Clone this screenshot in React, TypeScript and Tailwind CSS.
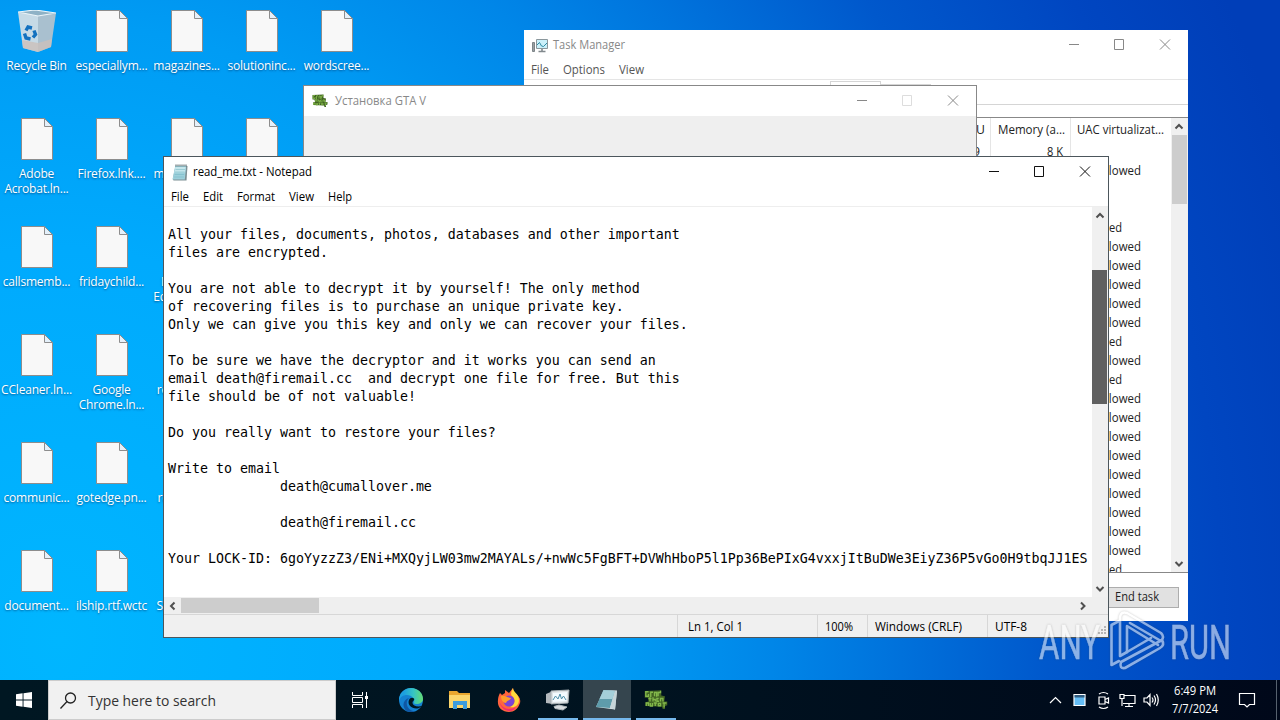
import type { ReactNode } from "react";

const desktopIcons = [
  ["Recycle Bin", "Adobe\nAcrobat.ln...", "callsmemb...", "CCleaner.ln...", "communic...", "document..."],
  ["especiallym...", "Firefox.lnk....", "fridaychild...", "Google\nChrome.ln...", "gotedge.pn...", "ilship.rtf.wctc"],
  ["magazines...", "mediacent...", "Microsoft\nEdge.lnk.w...", "readme.txt", "readme.rtf", "Skype.lnk..."],
  ["solutioninc...", ""],
  ["wordscree..."],
];

const uacRows = [
  "Not allowed", "", "", "Disabled", "Not allowed", "Not allowed", "Not allowed", "Not allowed", "Not allowed",
  "Disabled", "Not allowed", "Disabled", "Not allowed", "Not allowed", "Not allowed", "Not allowed", "Not allowed",
  "Not allowed", "Not allowed", "Not allowed", "Not allowed", "Disabled",
];

const note = `
All your files, documents, photos, databases and other important
files are encrypted.

You are not able to decrypt it by yourself! The only method
of recovering files is to purchase an unique private key.
Only we can give you this key and only we can recover your files.

To be sure we have the decryptor and it works you can send an
email death@firemail.cc  and decrypt one file for free. But this
file should be of not valuable!

Do you really want to restore your files?

Write to email
              death@cumallover.me

              death@firemail.cc

Your LOCK-ID: 6goYyzzZ3/ENi+MXQyjLW03mw2MAYALs/+nwWc5FgBFT+DVWhHboP5l1Pp36BePIxG4vxxjItBuDWe3EiyZ36P5vGo0H9tbqJJ1ES`;

function FileIcon() {
  return (
    <svg width="32" height="42" viewBox="0 0 32 42">
      <path d="M.5.5H23.5L31.5 8.5V41.5H.5Z" fill="#f8f8f8" stroke="#8d8d8d" />
      <path d="M23.5.5V8.5H31.5Z" fill="#e4f0fa" stroke="#8d8d8d" />
    </svg>
  );
}

function RecycleIcon() {
  return (
    <svg width="38" height="42" viewBox="0 0 38 42">
      <path d="M0 2 20 5 20 42 5 38Z" fill="#c6dae6" />
      <path d="M20 5 38 3 33 37 20 42Z" fill="#a9c0cf" />
      <path d="M4 30 20 33 34 29 33 37 20 42 5 38Z" fill="#cbbfba" opacity=".8" />
      <path d="M0 2 17 0 38 3 20 6Z" fill="#8fb2c6" stroke="#edf5f9" strokeWidth="1.2" />
      <g fill="none" stroke="#1371bf" strokeWidth="3.4">
        <path d="M8 20.5 10 17 14 18" />
        <path d="M16 20.5 17.5 24.5 15 27.5" />
        <path d="M12.5 29 8 28 6.5 23.5" />
      </g>
    </svg>
  );
}

function NotepadIcon() {
  return (
    <svg width="16" height="17" viewBox="0 0 16 17">
      <path d="M3.5 2H15.5L14.5 16.5H1.5L.8 15Z" fill="#7d8f94" />
      <path d="M3.2 2H14.2L12.8 15.5H.5Z" fill="#9dd0db" />
      <path d="M3.4 3H13.6L13 8.5H2.4Z" fill="#c5e6ec" />
      <path d="M3.5 1.5H15" stroke="#48585d" strokeWidth="2" strokeDasharray="1 1" />
      <path d="M3.5 5.5H13M3 8H12.6M2.6 10.5H12.2M2.2 13H11.8" stroke="#70b4c1" strokeWidth=".5" />
    </svg>
  );
}

function TaskIcon() {
  return (
    <svg width="16" height="16" viewBox="0 0 16 16">
      <path d="M.5 5.5H2.5V14.5H.5Z" fill="#9aa0a3" stroke="#7d8488" />
      <path d="M4.5 2.5H15.5V11.5H4.5Z" fill="#c9f0fa" stroke="#8b979c" />
      <path d="M5 8 7.5 5.5 9.5 9 11.5 9.5 15 6" fill="none" stroke="#2e8ba5" />
      <path d="M10 12V14M6.5 14.5H13.5" stroke="#81898d" strokeWidth="1.6" />
    </svg>
  );
}

// three stacked, slightly staggered lines of lettering
function GtaIcon({ size = 16 }: { size?: number }) {
  return (
    <svg width={size} height={size} viewBox="0 0 16 16">
      <path d="M.5 2 11.5 1.5V5L14 5.5 13.5 9H15.5V11.5L14 12V14H12.5L12 12.5 1 12V9.5L3 9 2.5 6.5H.5Z" fill="#426423" />
      <g fill="none" stroke="#82b74b" strokeWidth=".9">
        <path d="M3 2.5H1.2V5.5H3V4M4.5 6V2.8H6M7 5.5V3H8.4V5.8M9.4 5.5V3H11V1.8" />
        <path d="M4 6.2V9M3 7H5M6 6.2V9M6 7.6H7.5V9M9.8 7H8.6V8.8H10M11 9V7H12.6V9" />
        <path d="M1.5 12V10H3V12M4.2 10V12H5.6V10M6.5 10H8.6M7.5 10V12M9.6 10.2V11.8H11V10.2ZM12.4 10H15M13.4 10V13" />
      </g>
    </svg>
  );
}

// minimize, maximize and close glyphs, 45px apart
function Caption({ color, maxColor }: { color: string; maxColor?: string }) {
  return (
    <svg width="104" height="12" viewBox="0 0 104 12" fill="none" stroke={color} className="mr-4">
      <path d="M1 5.5H11" />
      <path d="M46.5 .5H55.5V10.5H46.5Z" stroke={maxColor ?? color} />
      <path d="M92 .5 102 10.5M102 .5 92 10.5" />
    </svg>
  );
}

function Chevron({ dir }: { dir: "up" | "down" | "left" | "right" }) {
  const d = {
    up: "M1.5 6.5 5 3 8.5 6.5",
    down: "M1.5 3 5 6.5 8.5 3",
    left: "M6.5 1.5 3 5 6.5 8.5",
    right: "M3 1.5 6.5 5 3 8.5",
  }[dir];
  return (
    <svg width="10" height="10" viewBox="0 0 10 10" fill="none" stroke="#505050" strokeWidth="2">
      <path d={d} />
    </svg>
  );
}

function Label({ w, children, className = "" }: { w: number; children: string; className?: string }) {
  return (
    <svg width={w} height="18" className={`shrink-0 overflow-visible ${className}`} fill="currentColor">
      <text x="0" y="13" textLength={w} lengthAdjust="spacingAndGlyphs">{children}</text>
    </svg>
  );
}

function TaskManager() {
  return (
    <section className="absolute left-[524px] top-[30px] flex h-[591px] w-[664px] flex-col bg-white text-[#222]">
      <div className="flex h-[30px] shrink-0 items-center pl-2 text-[#888]">
        <TaskIcon />
        <Label w={72} className="ml-[5px]">Task Manager</Label>
        <span className="flex-1" />
        <Caption color="#888" />
      </div>
      <div className="flex h-5 shrink-0 items-center gap-[14px] border-b border-[#e5e5e5] pl-[7px] text-[#555]">
        <Label w={18}>File</Label>
        <Label w={42}>Options</Label>
        <Label w={25}>View</Label>
      </div>
      <div className="flex h-[25px] shrink-0 items-end border-b border-[#d5d5d5] pl-[306px]">
        <div className="h-[23px] w-[51px] border border-b-0 border-[#d5d5d5]" />
        <div className="h-[20px] w-[50px] border border-b-0 border-[#d5d5d5] bg-[#f2f2f2]" />
      </div>
      <div className="mt-3 flex h-[456px] shrink-0 border-y border-[#888]">
        <div className="flex flex-1 justify-end overflow-hidden">
          <div className="w-[90px] border-r border-[#e5e5e5] text-right">
            <div className="flex h-6 items-center justify-end pr-[5px]"><Label w={24}>CPU</Label></div>
            <div className="flex h-[19px] items-center justify-end pr-[10px]"><Label w={14}>99</Label></div>
          </div>
          <div className="w-[80px] border-r border-[#e5e5e5]">
            <div className="flex h-6 items-center justify-end pr-[5px]"><Label w={67}>Memory (a...</Label></div>
            <div className="flex h-[19px] items-center justify-end pr-[7px]"><Label w={16}>8 K</Label></div>
          </div>
          <div className="w-[100px] pl-[6px]">
            <div className="flex h-6 items-center"><Label w={87}>UAC virtualizat...</Label></div>
            <div className="h-[19px]" />
            {uacRows.map((row, i) => (
              <div key={i} className="flex h-[19px] items-center">
                {row && <Label w={row === "Disabled" ? 45 : 64}>{row}</Label>}
              </div>
            ))}
          </div>
        </div>
        <div className="flex w-[17px] flex-col items-center bg-[#f0f0f0]">
          <div className="flex h-[17px] items-center pr-px"><Chevron dir="up" /></div>
          <div className="h-[69px] w-[15px] bg-[#cdcdcd]" />
          <div className="mt-auto flex h-[17px] items-center pr-px"><Chevron dir="down" /></div>
        </div>
      </div>
      <div className="flex flex-1 items-center justify-end pr-[9px]">
        <div className="flex h-[21px] w-[85px] items-center justify-center border border-[#adadad] bg-[#e1e1e1]">
          <Label w={44}>End task</Label>
        </div>
      </div>
    </section>
  );
}

function Installer() {
  return (
    <section className="absolute left-[303px] top-[85px] h-[400px] w-[674px] border border-[#888] bg-[#efefef]">
      <div className="flex h-[30px] items-center bg-white pl-2 text-[#888]">
        <GtaIcon />
        <Label w={91} className="ml-[7px]">Установка GTA V</Label>
        <span className="flex-1" />
        <Caption color="#888" maxColor="#ddd" />
      </div>
    </section>
  );
}

function Notepad() {
  return (
    <section className="absolute left-[163px] top-[156px] flex h-[482px] w-[946px] flex-col border border-[#4c565c] bg-white text-black">
      <div className="flex h-[30px] shrink-0 items-center pl-2">
        <NotepadIcon />
        <Label w={119} className="ml-[5px]">read_me.txt - Notepad</Label>
        <span className="flex-1" />
        <Caption color="#111" />
      </div>
      <div className="flex h-5 shrink-0 items-center gap-[14px] border-b border-[#eee] pl-[7px]">
        <Label w={18}>File</Label>
        <Label w={20}>Edit</Label>
        <Label w={38}>Format</Label>
        <Label w={25}>View</Label>
        <Label w={24}>Help</Label>
      </div>
      <div className="flex h-[390px] shrink-0">
        <pre className="w-[928px] overflow-hidden pl-1 pt-px font-['DejaVu_Sans_Mono',monospace] text-[13.29px] leading-[18px]">{note}</pre>
        <div className="flex w-4 flex-col items-center bg-[#f0f0f0] pr-px">
          <div className="flex h-[18px] items-center"><Chevron dir="up" /></div>
          <div className="mt-[45px] h-[134px] w-[15px] bg-[#606060]" />
          <div className="mt-auto flex h-[17px] items-center"><Chevron dir="down" /></div>
        </div>
      </div>
      <div className="flex h-[17px] shrink-0 items-center bg-[#efefef]">
        <div className="flex w-[17px] justify-center"><Chevron dir="left" /></div>
        <div className="h-[15px] w-[138px] bg-[#cdcdcd]" />
        <div className="ml-auto mr-[17px] flex w-[17px] justify-center"><Chevron dir="right" /></div>
      </div>
      <div className="flex flex-1 items-stretch border-t border-[#d7d7d7] bg-[#f0f0f0]">
        <div className="flex-1" />
        <div className="flex w-[140px] items-center border-l border-[#d7d7d7] pl-[10px] pt-0.5"><Label w={55}>Ln 1, Col 1</Label></div>
        <div className="flex w-[50px] items-center border-l border-[#d7d7d7] pl-[7px] pt-0.5"><Label w={28}>100%</Label></div>
        <div className="flex w-[120px] items-center border-l border-[#d7d7d7] pl-[7px] pt-0.5"><Label w={87}>Windows (CRLF)</Label></div>
        <div className="flex w-[121px] items-center border-l border-[#d7d7d7] pl-[7px] pt-0.5">
          <Label w={32}>UTF-8</Label>
          <svg width="12" height="12" className="ml-auto self-end" fill="#b5b5b5">
            <path d="M8 1h2v2H8zM5 4h2v2H5zM8 4h2v2H8zM2 7h2v2H2zM5 7h2v2H5zM8 7h2v2H8z" />
          </svg>
        </div>
      </div>
    </section>
  );
}

function Watermark() {
  return (
    <svg width="210" height="80" className="absolute left-[1035px] top-[605px] opacity-55 drop-shadow-[0_0_1px_rgba(60,60,60,.5)]" fill="white">
      <g className="font-['Roboto',sans-serif] text-[49px]" stroke="white" strokeWidth=".5">
        <text x="4" y="54" textLength="61" lengthAdjust="spacingAndGlyphs">ANY</text>
        <text x="135" y="54" textLength="61" lengthAdjust="spacingAndGlyphs">RUN</text>
      </g>
      <g fill="none" stroke="white" strokeWidth="2.6" strokeLinejoin="round" strokeLinecap="round">
        <path d="M84 16 76.5 20V60L84 56" />
        <path d="M92 47V21L123 40" />
        <path d="M92 47 85 51V12Q86 6 92 8L126 28Q130 32 126 36L95 18" />
        <path d="M92 47 116 33M86 57 127 35Q130 40 125 43L90 63Q84 64 86 57Z" />
      </g>
    </svg>
  );
}

function TaskButton({ children, state = "" }: { children: ReactNode; state?: string }) {
  return (
    <div className={`flex h-10 w-12 flex-col items-center ${state === "active" ? "bg-[#35454e]" : ""}`}>
      <div className="flex h-[38px] items-center pt-0.5">{children}</div>
      {state && <div className={`h-0.5 bg-[#76b9ed] ${state === "active" ? "w-12" : "w-10"}`} />}
    </div>
  );
}

function Taskbar() {
  return (
    <footer className="absolute inset-x-0 bottom-0 flex h-10 items-center bg-gradient-to-r from-[#001722] via-[#001320] to-[#00081a] text-white">
      <div className="flex w-12 justify-center">
        <svg width="16" height="16" viewBox="0 0 16 16" fill="white">
          <path d="M0 2.2 6.6 1.3V7.5H0ZM7.5 1.2 16 0V7.5H7.5ZM0 8.4H6.6V14.7L0 13.8ZM7.5 8.4H16V16L7.5 14.8Z" />
        </svg>
      </div>
      <div className="flex h-10 w-[288px] items-center border border-[#ccc] bg-[#f1f1f1] pl-[11px] text-[#333]">
        <svg width="17" height="17" viewBox="0 0 17 17" fill="none" stroke="#222" strokeWidth="1.3">
          <circle cx="10.5" cy="6" r="5" />
          <path d="M7 9.5.5 16.5" />
        </svg>
        <span className="ml-[11px] flex pt-[3px] text-[15px]"><Label w={128}>Type here to search</Label></span>
      </div>
      <TaskButton>
        <svg width="18" height="16" viewBox="0 0 18 16" fill="none" stroke="white">
          <path d="M1.5 0V3.5H11.5V0M1.5 16V12.5H11.5V16M1.5 5.5H11.5V10.5H1.5ZM15.5 0V16" />
          <path d="M14 4H17V7H14Z" fill="white" stroke="none" />
        </svg>
      </TaskButton>
      <div className="flex gap-px pl-[3px]">
        <TaskButton>
          <svg width="24" height="24" viewBox="0 0 24 24">
            <defs>
              <linearGradient id="edge" x1="0" x2="1">
                <stop offset=".2" stopColor="#1c9fe0" />
                <stop offset=".6" stopColor="#36c4c4" />
                <stop offset="1" stopColor="#65dc72" />
              </linearGradient>
            </defs>
            <circle cx="12" cy="12" r="12" fill="#1482d2" />
            <path d="M0 11C1 4 6 0 12 0C19 0 24 5 24 11C24 16 17 17 14.5 15C17 12 13 7 8 7C4 7 1 9 0 13Z" fill="url(#edge)" />
            <path d="M10 12C8 17 13 21 18 20.5C20 20.3 22 19 23 18C18 19 14 18 13.5 15C13.5 12 16 13 15 10.5C13 9 11 10 10 12Z" fill="#001722" />
            <path d="M10 10C5 15 9 23 16 23.3C13 24.5 10 24 8 23.3C3 20 3 12 10 10Z" fill="#0f57a4" />
          </svg>
        </TaskButton>
        <TaskButton>
          <svg width="22" height="19" viewBox="0 0 22 19">
            <path d="M0 0H8L10 2H21V17H0Z" fill="#e9a72f" />
            <path d="M0 4H21V17H0Z" fill="#fbd66c" />
            <path d="M4 18V10H18V18H14V14H8V18Z" fill="#3c9cdd" />
          </svg>
        </TaskButton>
        <TaskButton>
          <svg width="24" height="24" viewBox="0 0 24 24">
            <path d="M3 5 5 7 8 5 8 2 12 5 16 0 17 5C22 7 24 11 23 15C21 21 17 24 12 24C5 24 0 19 1 12C1 9 2 7 3 5Z" fill="#ff653c" />
            <path d="M16 0C16 4 22 6 22 12C22 18 17 20 13 19C18 17 19 11 15 8C13 6 15 2 16 0Z" fill="#ffd83d" />
            <circle cx="12" cy="13" r="5.5" fill="#7b43d5" />
            <path d="M4 8C8 7 9 9 14 10C13 13 10 12 9 15C6 15 4 12 4 8Z" fill="#ff9d2a" />
            <path d="M2 13C5 21 12 23 19 19C16 25 5 25 2 13Z" fill="#f22c70" />
          </svg>
        </TaskButton>
        <TaskButton state="open">
          <svg width="24" height="22" viewBox="0 0 24 22">
            <path d="M0 5 7 2V15L0 14Z" fill="#b3b9bd" />
            <path d="M5 2 23 1 22 14 5 15Z" fill="#dfe4e6" stroke="#a5adb1" />
            <path d="M7 4 21 3 20.5 12 7 13Z" fill="#f3fbff" />
            <path d="M7 11 9.5 7 12 10 14 5 15.5 10 17.5 7 20 11" stroke="#4f8fa9" fill="none" />
            <path d="M8 17.5 13 16 21 18 17 21 9 19.5Z" fill="#d7dcdf" stroke="#aeb6ba" />
          </svg>
        </TaskButton>
        <TaskButton state="active">
          <svg width="24" height="22" viewBox="0 0 24 22">
            <path d="M9 1 22 1.5 20 20.5 1 18Z" fill="#dce8ea" />
            <path d="M8.5 1 20 2 15 19 1 18Z" fill="#5e9cab" />
            <path d="M8.5 1 20 2 17.5 10 4.5 10Z" fill="#a4cfd9" />
            <path d="M20 2 22 2 20 20.5 15 19Z" fill="#c5d4d8" />
          </svg>
        </TaskButton>
        <TaskButton state="open"><GtaIcon size={24} /></TaskButton>
      </div>
      <div className="ml-auto flex h-full items-center">
        <svg width="112" height="20" viewBox="-1 0 112 20" fill="none" stroke="white" strokeWidth="1.2">
          <path d="M1 13 6.5 7.5 12 13" />
          <path d="M25 4.5H36V15.5H25Z" fill="#65bdf5" />
          <path d="M25.5 5H35.5V7.5H25.5Z" fill="#315c80" stroke="none" />
          <path d="M50 7H56V14H50ZM56 9.5 59.5 8V13L56 11.5M50 4Q54.5 1 59 4M50 17Q54.5 20 59 17" />
          <path d="M75 5.5H86V13.5H74M80 13.5V16.5M76 16.5H84M71 4.5H75V8.5H71ZM73 8.5V16" />
          <path d="M95 8H98L101 4.5V15.5L98 12H95ZM103 7.5Q105 10 103 12.5M105 5.5Q108 10 105 14.5M107.5 4Q111 10 107.5 16" />
        </svg>
        <div className="ml-[11px] flex w-[47px] flex-col items-center">
          <Label w={42}>6:49 PM</Label>
          <Label w={46}>7/7/2024</Label>
        </div>
        <svg width="18" height="18" viewBox="0 0 18 18" fill="none" stroke="white" strokeWidth="1.2" className="ml-5">
          <path d="M1.5 2.5H16.5V13.5H11.5L9 16 6.5 13.5H1.5Z" />
        </svg>
        <div className="ml-5 h-10 w-1 border-l border-[#56616e]" />
      </div>
    </footer>
  );
}

export default function App() {
  return (
    <main className="relative h-[720px] w-[1280px] overflow-hidden bg-[radial-gradient(1250px_1400px_at_60px_640px,#00b6ff_0%,#00aafd_28%,#009cf4_44%,#0086e8_57%,#0076de_65%,#0058cc_79%,#0046c1_93%,#003eb8_104%)] font-['Open_Sans','Noto_Sans',sans-serif] text-[12px]">
      <div className="-ml-px flex pt-2.5">
        {desktopIcons.map((column, x) => (
          <div key={x} className="flex w-[75px] flex-col">
            {column.map((name, y) => (
              <div key={y} className="flex h-[108px] flex-col items-center">
                {x === 0 && y === 0 ? <RecycleIcon /> : <FileIcon />}
                <div className="mt-[6px] whitespace-pre text-center leading-[15px] tracking-[-0.2px] text-white [text-shadow:0_1px_2px_rgba(0,40,90,.6)]">{name}</div>
              </div>
            ))}
          </div>
        ))}
      </div>
      <TaskManager />
      <Installer />
      <Notepad />
      <Watermark />
      <Taskbar />
    </main>
  );
}
